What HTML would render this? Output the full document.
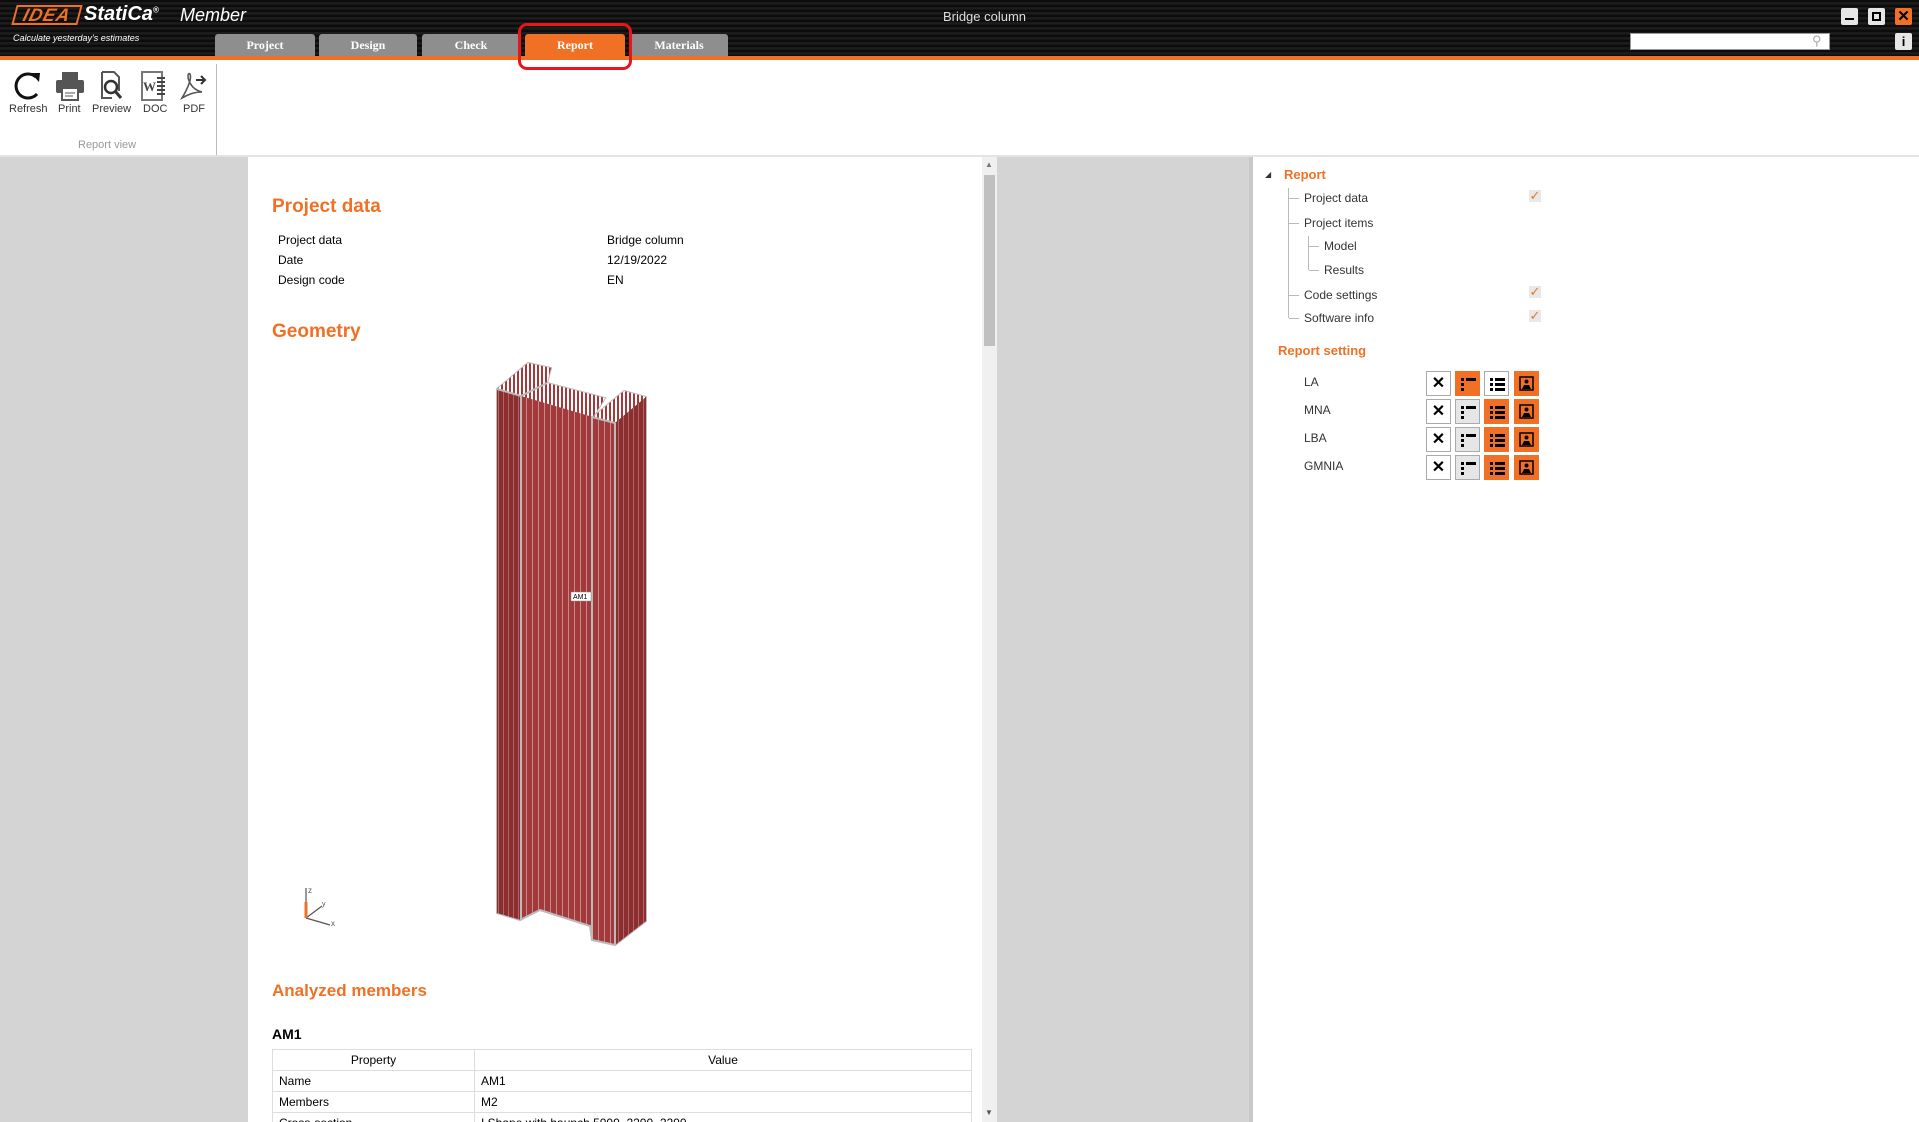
<!DOCTYPE html>
<html style="overflow:hidden;width:1919px;height:1122px"><head><meta charset="utf-8">
<style>
*{margin:0;padding:0;box-sizing:border-box}
body{width:1919px;height:1122px;overflow:hidden;background:#d4d4d4;font-family:"Liberation Sans",sans-serif;position:relative}
#wrap{position:absolute;left:0;top:0;width:1919px;height:1122px;overflow:hidden}
.abs{position:absolute}
#top{left:0;top:0;width:1919px;height:56px;background:repeating-linear-gradient(180deg,#0c0c0c 0,#0c0c0c 2px,#2a2a2a 3px,#111 4px,#1c1c1c 5px);}
#orange{left:0;top:56px;width:1919px;height:4px;background:#f07125}
.tab{position:absolute;top:34px;height:22px;background:#8e8e8e;color:#fff;font-weight:bold;font-size:12px;text-align:center;line-height:22px;border-radius:3px 3px 0 0;font-family:"Liberation Serif",serif}
#ribbon{left:0;top:60px;width:1919px;height:96px;background:#fff;border-bottom:1px solid #c8c8c8}
.ic{position:absolute;top:70px}
.lbl{position:absolute;top:103px;font-size:11px;color:#333}
.t{position:absolute;font-size:12px;color:#000}
h2{position:absolute;font-size:19px;color:#f07125;font-weight:bold}
.tr{position:absolute;font-size:12px;color:#333}
.btn{position:absolute;width:25px;height:25px;border:1px solid #aaa;background:#fff}
.o{background:#f07125;border-color:#f07125}
.g{background:#e6e6e6}
.chk{position:absolute;color:#f07125;font-size:13px;background:#e8e8e8;width:12px;height:12px;line-height:12px;text-align:center}
table{border-collapse:collapse;font-size:12px}
td{border:1px solid #ddd;height:21px;padding:0 6px}
</style></head><body><div id="wrap">
<div id="top" class="abs"></div>
<div class="abs" style="left:14px;top:5px;width:66px;height:20px;border:2px solid #f07125;transform:skewX(-15deg);color:#f07125;font-weight:bold;font-style:italic;font-size:18px;line-height:16px;text-align:center;letter-spacing:1px">IDEA</div>
<div class="abs" style="left:84px;top:3px;color:#fff;font-weight:bold;font-style:italic;font-size:20px">StatiCa<sup style="font-size:8px">®</sup></div>
<div class="abs" style="left:180px;top:5px;color:#fff;font-style:italic;font-size:18px">Member</div>
<div class="abs" style="left:13px;top:33px;color:#fff;font-style:italic;font-size:9px">Calculate yesterday's estimates</div>
<div class="abs" style="left:0;top:9px;width:1969px;text-align:center;color:#ddd;font-size:13px">Bridge column</div>
<div class="tab" style="left:215px;width:100px">Project</div>
<div class="tab" style="left:319px;width:98px">Design</div>
<div class="tab" style="left:422px;width:98px">Check</div>
<div class="tab" style="left:525px;width:100px;background:#f07125">Report</div>
<div class="tab" style="left:630px;width:98px">Materials</div>
<div class="abs" style="left:518px;top:23px;width:114px;height:47px;border:3px solid #e8151b;border-radius:9px;z-index:5"></div>
<div class="abs" style="left:1630px;top:33px;width:200px;height:17px;background:#fff;border:1px solid #999"></div>
<div class="abs" style="left:1812px;top:33px;color:#aaa;font-size:13px">⚲</div>
<div class="abs" style="left:1841px;top:8px;width:17px;height:17px;background:#e6e6e6;border-radius:2px"><div style="margin:10px 4px;width:9px;height:2px;background:#000"></div></div>
<div class="abs" style="left:1868px;top:8px;width:17px;height:17px;background:#e6e6e6;border-radius:2px"><div style="margin:4px;width:9px;height:9px;border:2px solid #000"></div></div>
<div class="abs" style="left:1895px;top:8px;width:17px;height:17px;background:#f07125;border-radius:2px;font-weight:bold;text-align:center;line-height:17px;font-size:15px">✕</div>
<div class="abs" style="left:1895px;top:33px;width:17px;height:17px;background:#e6e6e6;border-radius:2px;font-weight:bold;text-align:center;line-height:17px;font-size:13px">i</div>
<div id="orange" class="abs"></div>
<div id="ribbon" class="abs"></div>
<svg class="ic" style="left:13px" width="30" height="32" viewBox="0 0 30 32"><path d="M23 7A12 12 0 1 0 24 24" fill="none" stroke="#111" stroke-width="3"/><path d="M18 3L27 3L26 12Z" fill="#111"/></svg>
<svg class="ic" style="left:54px" width="32" height="32" viewBox="0 0 32 32"><rect x="8" y="2" width="16" height="8" fill="#555"/><rect x="2" y="10" width="28" height="13" rx="2" fill="#555"/><rect x="8" y="18" width="16" height="12" fill="#fff" stroke="#555" stroke-width="2"/><path d="M11 23h10M11 26h8" stroke="#555"/></svg>
<svg class="ic" style="left:98px" width="28" height="32" viewBox="0 0 28 32"><path d="M4 2h12l5 5v14M4 2v26h10" fill="none" stroke="#555" stroke-width="2"/><circle cx="13" cy="17" r="6" fill="none" stroke="#333" stroke-width="2.5"/><path d="M17 21l6 7" stroke="#333" stroke-width="3"/></svg>
<svg class="ic" style="left:139px" width="30" height="32" viewBox="0 0 30 32"><path d="M3 2h20v28H3z" fill="#fff" stroke="#777" stroke-width="2"/><text x="4" y="21" font-size="13" font-family="Liberation Serif" font-weight="bold" fill="#444">W</text><path d="M18 8h8M18 12h8M18 16h8M18 20h8M18 24h8" stroke="#444" stroke-width="2"/></svg>
<svg class="ic" style="left:178px" width="30" height="32" viewBox="0 0 30 32"><path d="M4 28C10 18 14 8 12 4C10 2 8 8 14 16C18 21 24 22 24 22C14 22 8 26 4 28Z" fill="none" stroke="#555" stroke-width="1.6"/><path d="M18 10h8M23 6l4 4-4 4" fill="none" stroke="#333" stroke-width="2"/></svg>
<div class="lbl" style="left:9px">Refresh</div>
<div class="lbl" style="left:58px">Print</div>
<div class="lbl" style="left:92px">Preview</div>
<div class="lbl" style="left:143px">DOC</div>
<div class="lbl" style="left:183px">PDF</div>
<div class="abs" style="left:78px;top:139px;font-size:11px;color:#999">Report view</div>
<div class="abs" style="left:216px;top:64px;width:1px;height:91px;background:#bbb"></div>
<div class="abs" style="left:0;top:155px;width:1919px;height:2px;background:#e3e3e3"></div>

<div class="abs" style="left:248px;top:157px;width:734px;height:965px;background:#fff"></div>
<div class="abs" style="left:982px;top:157px;width:15px;height:965px;background:#f0f0f0"></div>
<div class="abs" style="left:984px;top:175px;width:11px;height:171px;background:#c0c0c0"></div>
<div class="abs" style="left:985px;top:160px;font-size:8px;color:#777">▲</div>
<div class="abs" style="left:985px;top:1108px;font-size:8px;color:#555">▼</div>
<h2 style="left:272px;top:196px">Project data</h2>
<div class="t" style="left:278px;top:233px">Project data</div><div class="t" style="left:607px;top:233px">Bridge column</div>
<div class="t" style="left:278px;top:253px">Date</div><div class="t" style="left:607px;top:253px">12/19/2022</div>
<div class="t" style="left:278px;top:273px">Design code</div><div class="t" style="left:607px;top:273px">EN</div>
<h2 style="left:272px;top:321px">Geometry</h2>
<svg class="abs" style="left:0;top:0" width="1000" height="1000">
<defs><pattern id="st" width="6" height="10" patternUnits="userSpaceOnUse"><rect width="6" height="10" fill="#a23a3b"/><rect x="4" width="1" height="10" fill="#c58a8a"/></pattern>
<pattern id="st2" width="5" height="10" patternUnits="userSpaceOnUse"><rect width="5" height="10" fill="#8a2e2f"/><rect x="3" width="1" height="10" fill="#b06565"/></pattern>
<pattern id="st3" width="4" height="10" patternUnits="userSpaceOnUse"><rect width="4" height="10" fill="#fff"/><rect x="1" width="2" height="10" fill="#a23a3b"/></pattern></defs>
<polygon points="497,389 528,363 551,368 547,383 605,398 593,417 624,391 646,397 646,921 615,945 592,940 590,926 540,910 520,920 497,913" fill="url(#st)" stroke="#bbb" stroke-width="2"/>
<polygon points="497,389 528,363 551,368 547,383 521,396" fill="url(#st3)"/>
<polygon points="547,383 605,398 593,417 521,396" fill="url(#st3)"/>
<polygon points="593,417 624,391 646,397 615,423" fill="url(#st3)"/>
<polygon points="497,389 521,396 521,920 497,913" fill="url(#st2)"/>
<polygon points="615,423 646,397 646,921 615,945" fill="url(#st2)"/>
<path d="M521,396V920M592,417V940M615,423V945M521,396L547,383M592,417L615,423M497,389L521,396" stroke="#bbb" stroke-width="2" fill="none"/>
<rect x="571" y="592" width="20" height="9" fill="#fff" stroke="#888" stroke-width="0.5"/><text x="573" y="599" font-size="7" font-family="Liberation Sans">AM1</text>
<path d="M306,888V918M306,918L330,925M306,918L322,906" stroke="#555" stroke-width="1.2"/><path d="M306,902V918" stroke="#f07125" stroke-width="3"/>
<text x="308" y="893" font-size="8" fill="#555">z</text><text x="322" y="906" font-size="7" fill="#555">y</text><text x="331" y="926" font-size="8" fill="#555">x</text>
</svg>
<h2 style="left:272px;top:981px;font-size:17px">Analyzed members</h2>
<div class="abs" style="left:272px;top:1026px;font-size:14px;font-weight:bold">AM1</div>
<table class="abs" style="left:272px;top:1049px;width:700px">
<tr><td style="width:202px;text-align:center">Property</td><td style="text-align:center">Value</td></tr>
<tr><td>Name</td><td>AM1</td></tr>
<tr><td>Members</td><td>M2</td></tr>
<tr><td>Cross-section</td><td>I Shape with haunch 5000_2200_2200</td></tr>
</table>

<div class="abs" style="left:1249px;top:157px;width:4px;height:965px;background:#c8c8c8"></div>
<div class="abs" style="left:1253px;top:157px;width:666px;height:965px;background:#fff"></div>
<div class="abs" style="left:1265px;top:170px;font-size:8px;color:#333">◢</div>
<div class="abs" style="left:1284px;top:167px;font-size:13px;font-weight:bold;color:#f07125">Report</div>
<div class="abs" style="left:1288px;top:188px;width:1px;height:130px;background:#bbb"></div>
<div class="abs" style="left:1308px;top:236px;width:1px;height:34px;background:#bbb"></div>
<div class="abs" style="left:1289px;top:198px;width:10px;height:1px;background:#bbb"></div>
<div class="abs" style="left:1289px;top:223px;width:10px;height:1px;background:#bbb"></div>
<div class="abs" style="left:1309px;top:246px;width:10px;height:1px;background:#bbb"></div>
<div class="abs" style="left:1309px;top:270px;width:10px;height:1px;background:#bbb"></div>
<div class="abs" style="left:1289px;top:295px;width:10px;height:1px;background:#bbb"></div>
<div class="abs" style="left:1289px;top:318px;width:10px;height:1px;background:#bbb"></div>
<div class="tr" style="left:1304px;top:191px">Project data</div>
<div class="tr" style="left:1304px;top:216px">Project items</div>
<div class="tr" style="left:1324px;top:239px">Model</div>
<div class="tr" style="left:1324px;top:263px">Results</div>
<div class="tr" style="left:1304px;top:288px">Code settings</div>
<div class="tr" style="left:1304px;top:311px">Software info</div>
<div class="chk" style="left:1529px;top:190px">✓</div>
<div class="chk" style="left:1529px;top:286px">✓</div>
<div class="chk" style="left:1529px;top:310px">✓</div>
<div class="abs" style="left:1278px;top:343px;font-size:13px;font-weight:bold;color:#f07125">Report setting</div>
<div class="tr" style="left:1304px;top:375px">LA</div>
<div class="tr" style="left:1304px;top:403px">MNA</div>
<div class="tr" style="left:1304px;top:431px">LBA</div>
<div class="tr" style="left:1304px;top:459px">GMNIA</div>
<div class="btn" style="left:1426px;top:371px;text-align:center;font-weight:bold;line-height:23px">✕</div>
<div class="btn o" style="left:1455px;top:371px"></div>
<div class="btn" style="left:1484px;top:371px"></div>
<div class="btn o" style="left:1514px;top:371px"></div>
<div class="btn" style="left:1426px;top:399px;text-align:center;font-weight:bold;line-height:23px">✕</div>
<div class="btn g" style="left:1455px;top:399px"></div>
<div class="btn o" style="left:1484px;top:399px"></div>
<div class="btn o" style="left:1514px;top:399px"></div>
<div class="btn" style="left:1426px;top:427px;text-align:center;font-weight:bold;line-height:23px">✕</div>
<div class="btn g" style="left:1455px;top:427px"></div>
<div class="btn o" style="left:1484px;top:427px"></div>
<div class="btn o" style="left:1514px;top:427px"></div>
<div class="btn" style="left:1426px;top:455px;text-align:center;font-weight:bold;line-height:23px">✕</div>
<div class="btn g" style="left:1455px;top:455px"></div>
<div class="btn o" style="left:1484px;top:455px"></div>
<div class="btn o" style="left:1514px;top:455px"></div>
<svg class="abs" style="left:0;top:0;pointer-events:none" width="1919" height="500">
<g id="r1" fill="#000">
<path d="M1461 378h3v3h-3zM1466 378h10v3h-10zM1461 383h3v3h-3zM1461 388h3v3h-3z"/>
<path d="M1490 378h3v3h-3zM1495 378h10v3h-10zM1490 383h3v3h-3zM1495 383h10v3h-10zM1490 388h3v3h-3zM1495 388h10v3h-10z"/>
<rect x="1520" y="377" width="13" height="13" fill="none" stroke="#000" stroke-width="1.5"/><circle cx="1526.5" cy="381.5" r="2"/><path d="M1522 389h9l-2-4h-5z"/>
</g>
<use href="#r1" y="28"/>
<use href="#r1" y="56"/>
<use href="#r1" y="84"/>
</svg>
</div></body></html>
